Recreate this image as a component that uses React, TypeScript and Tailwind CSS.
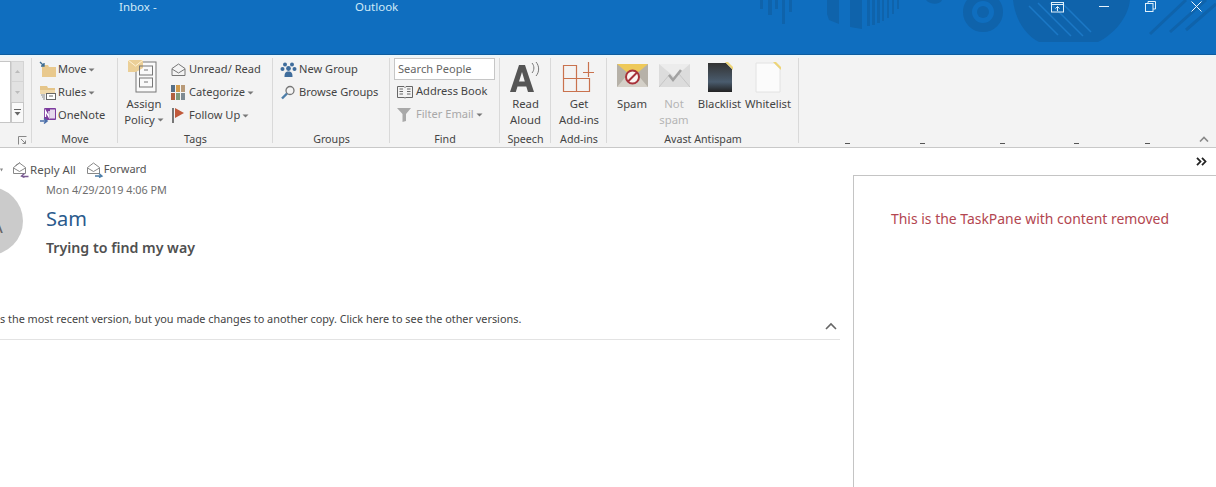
import React from "react";

const font = { fontFamily: '"Noto Sans", "Open Sans", sans-serif' };

function Caret({ className = "" }: { className?: string }) {
  return (
    <svg width="7" height="4" viewBox="0 0 7 4" className={`shrink-0 ${className}`}>
      <path d="M0.5 0.5H6.5L3.5 3.5Z" fill="#777" />
    </svg>
  );
}

function TitleArt() {
  return (
    <svg className="absolute left-[740px] top-0" width="476" height="55" viewBox="0 0 476 55">
      <g fill="#0f63ab">
        <rect x="20" y="0" width="3" height="9" />
        <rect x="28" y="0" width="4" height="15" />
        <rect x="35" y="0" width="3" height="9" />
        <rect x="42" y="0" width="3" height="24" />
        <rect x="49" y="0" width="3" height="12" />
        <path d="M87 0H99V24L89 20L87 14Z" />
        <path d="M110 0H122V29L110 27Z" />
        <rect x="127" y="0" width="3" height="26" />
        <rect x="132" y="0" width="3" height="25" />
        <rect x="137" y="0" width="3" height="23" />
        <rect x="142" y="0" width="2" height="21" />
        <rect x="147" y="0" width="2" height="18" />
        <rect x="152" y="0" width="2" height="14" />
        <rect x="157" y="0" width="2" height="9" />
        <path d="M186 0H202C200 5 190 5 186 0Z" />
        <path d="M273 0H390C388 18 374 34 358 42H299C284 34 275 18 273 0Z" />
      </g>
      <circle cx="243" cy="12" r="15.5" fill="none" stroke="#0f63ab" strokeWidth="9" />
      <circle cx="243" cy="12" r="6" fill="#0f63ab" />
      <g stroke="#1b78c6" strokeWidth="1.5">
        <path d="M289 6L318 35M298 3L331 36M310 3L343 36M322 3L351 32" />
      </g>
      <g stroke="#0f63ab" strokeWidth="3">
        <path d="M410 34L446 0M430 32L466 0M446 30L476 4" />
      </g>
    </svg>
  );
}

function WindowButtons() {
  return (
    <div className="absolute top-0 left-[1034px] flex text-white">
      <div className="w-[46px] flex justify-center pt-[1px]">
        <svg width="14" height="12" viewBox="0 0 14 12" fill="none" stroke="#dff0fb">
          <rect x="1.5" y="1.5" width="12" height="9.5" />
          <path d="M1.5 3.5H13.5M7.5 10V5.5M5.5 7.5L7.5 5.5L9.5 7.5" />
        </svg>
      </div>
      <div className="w-[47px] flex justify-center pt-[6px]">
        <div className="w-[10px] h-[1px] bg-[#e6f3fc]" />
      </div>
      <div className="w-[46px] flex justify-center pt-[1px]">
        <svg width="11" height="11" viewBox="0 0 11 11" fill="none" stroke="#dff0fb">
          <rect x="0.5" y="2.5" width="7.5" height="8" />
          <path d="M3 2.5V0.5H10.5V8H8" />
        </svg>
      </div>
      <div className="w-[47px] flex justify-center pt-[1px]">
        <svg width="11" height="11" viewBox="0 0 11 11" fill="none" stroke="#eef7fd">
          <path d="M0.5 0.5L10.5 10.5M10.5 0.5L0.5 10.5" />
        </svg>
      </div>
    </div>
  );
}

function Row({ icon, label, caret, left, gray }: { icon: React.ReactNode; label: string; caret?: boolean; left: string; gray?: boolean }) {
  return (
    <div className={`h-[23px] flex items-center ${left}`}>
      {icon}
      <span className={`text-[11.1px] whitespace-nowrap ${gray ? "text-[#a8a8a8]" : "text-[#444]"}`}>{label}</span>
      {caret && <Caret className="ml-[2px]" />}
    </div>
  );
}

function Group({ width, label, children }: { width: string; label: string; children: React.ReactNode }) {
  return (
    <div className={`${width} h-[85px] shrink-0 mr-[1px] border-r border-[#d9d9d9] flex flex-col`}>
      <div className="h-[73px] shrink-0">{children}</div>
      <div className="h-[16px] shrink-0 text-[10.7px] leading-[16px] text-center text-[#444] whitespace-nowrap">{label}</div>
    </div>
  );
}

const MoveIcon = (
  <svg width="19" height="18" viewBox="0 0 19 18" className="shrink-0">
    <path d="M3 4H9L10 6H17V16H3Z" fill="#e9c98d" />
    <path d="M1 1L5 5M5 2V5H2" stroke="#3f6d93" strokeWidth="1.4" fill="none" />
  </svg>
);
const RulesIcon = (
  <svg width="19" height="18" viewBox="0 0 19 18" className="shrink-0">
    <path d="M1 2H8L9 4H16V9H1Z" fill="#e5c589" />
    <rect x="1" y="6" width="15" height="4" fill="#f0d9ac" />
    <rect x="7.5" y="9.5" width="9" height="6" fill="#fff" stroke="#666" />
    <path d="M10 12H14" stroke="#666" />
    <path d="M2 11H6M3 13H6M4 15H6" stroke="#888" />
  </svg>
);
const OneNoteIcon = (
  <svg width="19" height="18" viewBox="0 0 19 18" className="shrink-0">
    <rect x="5" y="1" width="12" height="12" rx="1" fill="#7c3a9e" />
    <rect x="11" y="2.5" width="5" height="9" fill="#e6d8ee" />
    <path d="M6.5 10V4L10 10V4" stroke="#fff" strokeWidth="1.3" fill="none" />
    <path d="M1 14H7M5 11.5L8 14L5 16.5" stroke="#4a6ea9" strokeWidth="1.6" fill="none" />
  </svg>
);
const UnreadIcon = (
  <svg width="18" height="14" viewBox="0 0 18 14" fill="none" stroke="#777" className="shrink-0">
    <path d="M1 5.5L7.5 1L14 5.5V12.5H1Z" />
    <path d="M1 6L7.5 10L14 6" />
  </svg>
);
const CategorizeIcon = (
  <svg width="18" height="16" viewBox="0 0 18 16" className="shrink-0">
    <rect x="0" y="0" width="4" height="7" fill="#566f86" />
    <rect x="5" y="0" width="4" height="7" fill="#d19a4b" />
    <rect x="10" y="0" width="4" height="7" fill="#b89a78" />
    <rect x="0" y="8" width="4" height="7" fill="#b0603f" />
    <rect x="5" y="8" width="4" height="7" fill="#7f9a7a" />
    <rect x="10" y="8" width="4" height="7" fill="#7d8a92" />
  </svg>
);
const FlagIcon = (
  <svg width="18" height="16" viewBox="0 0 18 16" className="shrink-0">
    <rect x="1" y="0" width="2" height="15" fill="#777" />
    <path d="M4 0L13 5L4 10Z" fill="#c0593b" />
  </svg>
);
const NewGroupIcon = (
  <svg width="19" height="16" viewBox="0 0 19 16" className="shrink-0" fill="#3f6d9c">
    <circle cx="5" cy="2.5" r="2" />
    <circle cx="12" cy="2.5" r="2" />
    <circle cx="2.5" cy="7" r="2" />
    <circle cx="14.5" cy="7" r="2" />
    <circle cx="8.5" cy="6.5" r="2.4" />
    <path d="M4.5 15C4.5 11 5.5 9.5 8.5 9.5C11.5 9.5 12.5 11 12.5 15Z" />
  </svg>
);
const BrowseIcon = (
  <svg width="19" height="16" viewBox="0 0 19 16" fill="none" className="shrink-0">
    <circle cx="10" cy="5.5" r="4" stroke="#777" strokeWidth="1.3" />
    <path d="M7 8.5L2 13.5" stroke="#4d7ea8" strokeWidth="2.4" />
  </svg>
);
const BookIcon = (
  <svg width="19" height="14" viewBox="0 0 19 14" fill="none" stroke="#666" className="shrink-0">
    <path d="M0.5 1.5H7L8 2.5L9 1.5H15.5V12.5H9L8 13L7 12.5H0.5Z" />
    <path d="M2.5 4H6M2.5 6.5H6M2.5 9H6M10 4H13.5M10 6.5H13.5M10 9H13.5" />
  </svg>
);
const FilterIcon = (
  <svg width="19" height="14" viewBox="0 0 19 14" className="shrink-0">
    <path d="M0 0H14L9 6V13L5.5 14V6Z" fill="#a9a9a9" />
  </svg>
);

function PolicyIcon() {
  return (
    <svg width="32" height="33" viewBox="0 0 32 33" className="mx-auto">
      <rect x="8" y="2" width="20" height="30" fill="#fafafa" stroke="#777" />
      <path d="M0 0H15V8L8 12H0Z" fill="#ebcf97" />
      <path d="M0 0L7.5 6L15 0" fill="none" stroke="#fff3d8" />
      <rect x="11.5" y="6" width="13" height="9" fill="none" stroke="#777" />
      <rect x="11.5" y="18" width="13" height="9" fill="none" stroke="#777" />
      <path d="M16 10H20M16 22H20" stroke="#777" />
    </svg>
  );
}

function BigColumn({ icon, top, gap, lines, caret }: { icon: React.ReactNode; top: string; gap: string; lines: string[]; caret?: boolean }) {
  return (
    <div className={`flex flex-col items-center ${top}`}>
      <div className={gap}>{icon}</div>
      <div className="text-[11.3px] leading-[16px] text-[#444] text-center whitespace-nowrap">{lines[0]}</div>
      <div className="text-[11.3px] leading-[16px] text-[#444] text-center whitespace-nowrap flex items-center gap-[2px]">
        {lines[1]}
        {caret && <Caret />}
      </div>
    </div>
  );
}

const ReadAloudIcon = (
  <svg width="32" height="32" viewBox="0 0 32 32">
    <path d="M9 3H15L24 30H18L16.3 24.5H7.5L5.8 30H0ZM9 19.5H14.8L12 10Z" fill="#555" />
    <path d="M22 1C24.5 4 24.5 8 22 11M26 0C29.5 4 29.5 10 26 14" fill="none" stroke="#777" />
  </svg>
);
const AddinsIcon = (
  <svg width="34" height="33" viewBox="0 0 34 33" fill="none">
    <path d="M1.5 4.5H14.5V30.5H1.5ZM1.5 17.5H27.5V30.5H14.5" stroke="#c9724e" strokeWidth="1.2" />
    <path d="M21 11.5H32M26.5 1V16" stroke="#c9724e" strokeWidth="1.2" />
  </svg>
);

function Envelope({ disabled }: { disabled?: boolean }) {
  if (disabled) {
    return (
      <svg width="31" height="26" viewBox="0 0 31 26">
        <rect x="0" y="2" width="31" height="23" fill="#dcdcdc" />
        <path d="M0 2L15.5 15L31 2" fill="#ececec" />
        <path d="M0 25L11 12M31 25L20 12" stroke="#c6c6c6" />
        <path d="M10 13L14 18L22 8" fill="none" stroke="#a2a2a2" strokeWidth="2.6" />
      </svg>
    );
  }
  return (
    <svg width="31" height="26" viewBox="0 0 31 26">
      <rect x="0" y="2" width="31" height="23" fill="#b6b1a8" />
      <path d="M0 2H31L15.5 15Z" fill="#eec95a" />
      <path d="M0 25L11 12L15.5 15L20 12L31 25Z" fill="#d4d0c8" />
      <circle cx="15.5" cy="15" r="6.5" fill="#fbf4f2" stroke="#a8313a" strokeWidth="2" />
      <path d="M11 19.5L20 10.5" stroke="#a8313a" strokeWidth="2" />
    </svg>
  );
}

function Note({ dark }: { dark?: boolean }) {
  return (
    <svg width="28" height="32" viewBox="0 0 28 32">
      <defs>
        <linearGradient id="darkNote" x1="0" y1="0" x2="0" y2="1">
          <stop offset="0" stopColor="#333" />
          <stop offset="0.65" stopColor="#4a5c6e" />
          <stop offset="1" stopColor="#222" />
        </linearGradient>
      </defs>
      <path d="M2 1H20L26 7V30H2Z" fill={dark ? "url(#darkNote)" : "#fbfbfb"} stroke={dark ? "none" : "#e2e2e2"} />
      <path d="M19 0H22L27 5V8Z" fill="#eed577" />
    </svg>
  );
}

function AvastColumn({ icon, lines, width, gray }: { icon: React.ReactNode; lines: string[]; width: string; gray?: boolean }) {
  return (
    <div className={`${width} flex flex-col items-center`}>
      <div className="h-[38px] pt-[4px]">{icon}</div>
      {lines.map((l) => (
        <div key={l} className={`text-[11.3px] leading-[16px] whitespace-nowrap ${gray ? "text-[#b5b5b5]" : "text-[#444]"}`}>
          {l}
        </div>
      ))}
    </div>
  );
}

function Ribbon() {
  return (
    <div className="h-[93px] pt-[1px] flex bg-[#f3f3f3] border-b border-[#c8c8c8] border-t-2 border-t-[#eaf6fb]">
      <Group width="w-[32px]" label="">
        <div className="flex pt-[3px]">
          <div className="w-[11px] h-[62px] bg-white border-y border-r border-[#c6c6c6]" />
          <div className="w-[13px] flex flex-col">
            <div className="h-[21px] bg-[#e2e2e2] border border-[#d4d4d4] flex items-center justify-center">
              <svg width="5" height="3" viewBox="0 0 5 3"><path d="M0 3H5L2.5 0Z" fill="#bbb" /></svg>
            </div>
            <div className="h-[20px] bg-[#e2e2e2] border-x border-[#d4d4d4] flex items-center justify-center">
              <svg width="5" height="3" viewBox="0 0 5 3"><path d="M0 0H5L2.5 3Z" fill="#bbb" /></svg>
            </div>
            <div className="h-[21px] bg-[#f9f9f9] border border-[#c6c6c6] flex items-center justify-center">
              <svg width="7" height="7" viewBox="0 0 7 7"><path d="M0 0.5H7" stroke="#666" /><path d="M0.5 3H6.5L3.5 6.5Z" fill="#666" /></svg>
            </div>
          </div>
        </div>
        <div className="flex justify-end pr-[4px] pt-[13px]">
          <svg width="9" height="9" viewBox="0 0 9 9" fill="none" stroke="#888">
            <path d="M0.5 8.5V0.5H8.5" />
            <path d="M3 3L7.5 7.5M7.5 4.5V7.5H4.5" />
          </svg>
        </div>
      </Group>

      <Group width="w-[85px]" label="Move">
        <Row left="pl-[6px]" icon={MoveIcon} label="Move" caret />
        <Row left="pl-[6px]" icon={RulesIcon} label="Rules" caret />
        <Row left="pl-[6px]" icon={OneNoteIcon} label="OneNote" />
      </Group>

      <Group width="w-[154px]" label="Tags">
        <div className="flex">
          <div className="w-[52px] pr-[2px] shrink-0">
            <BigColumn top="pt-[2px]" gap="mb-[3px]" icon={<PolicyIcon />} lines={["Assign", "Policy"]} caret />
          </div>
          <div>
            <Row left="" icon={UnreadIcon} label="Unread/ Read" />
            <Row left="" icon={CategorizeIcon} label="Categorize" caret />
            <Row left="" icon={FlagIcon} label="Follow Up" caret />
          </div>
        </div>
      </Group>

      <Group width="w-[116px]" label="Groups">
        <Row left="pl-[6px]" icon={NewGroupIcon} label="New Group" />
        <Row left="pl-[6px]" icon={BrowseIcon} label="Browse Groups" />
      </Group>

      <Group width="w-[109px]" label="Find">
        <div className="pl-[3px]">
          <div className="w-[101px] h-[22px] bg-white border border-[#c6c6c6] px-[3px] text-[11.1px] leading-[19px] text-[#666]">Search People</div>
        </div>
        <Row left="pl-[6px]" icon={BookIcon} label="Address Book" />
        <Row left="pl-[6px]" icon={FilterIcon} label="Filter Email" caret gray />
      </Group>

      <Group width="w-[50px]" label="Speech">
        <BigColumn top="pt-[4px]" gap="mb-[2px]" icon={ReadAloudIcon} lines={["Read", "Aloud"]} />
      </Group>

      <Group width="w-[55px]" label="Add-ins">
        <BigColumn top="pt-[3px]" gap="mb-[2px]" icon={AddinsIcon} lines={["Get", "Add-ins"]} />
      </Group>

      <Group width="w-[191px]" label="Avast Antispam">
        <div className="flex pl-[2px]">
          <AvastColumn width="w-[44px]" icon={<Envelope />} lines={["Spam"]} />
          <AvastColumn width="w-[40px]" icon={<Envelope disabled />} lines={["Not", "spam"]} gray />
          <AvastColumn width="w-[51px]" icon={<Note dark />} lines={["Blacklist"]} />
          <AvastColumn width="w-[46px]" icon={<Note />} lines={["Whitelist"]} />
        </div>
      </Group>

      <div className="flex-1 h-[87px] flex flex-col justify-end">
        <div className="flex items-end justify-between">
          <div className="flex pb-[1px]">
            <div className="ml-[45px] w-[5px] h-[1px] bg-[#555]" />
            <div className="ml-[70px] w-[5px] h-[1px] bg-[#555]" />
            <div className="ml-[75px] w-[5px] h-[1px] bg-[#555]" />
            <div className="ml-[69px] w-[5px] h-[1px] bg-[#555]" />
            <div className="ml-[66px] w-[5px] h-[1px] bg-[#555]" />
          </div>
          <svg width="10" height="6" viewBox="0 0 10 6" fill="none" stroke="#888" strokeWidth="1.6" className="mr-[7px] mb-[3px]">
            <path d="M1 5.5L5 1.5L9 5.5" />
          </svg>
        </div>
      </div>
    </div>
  );
}

function MiniEnvelope({ reply }: { reply?: boolean }) {
  return (
    <svg width="18" height="16" viewBox="0 0 18 16" fill="none" className="shrink-0">
      <path d="M1.5 5.5L7.5 1L13.5 5.5V11.5H1.5Z" stroke="#888" />
      {reply && <path d="M3.5 3.5L8 0.5" stroke="#888" />}
      <path d="M1.5 6L7.5 9.5L13.5 6" stroke="#888" />
      {reply ? (
        <path d="M16.5 14.5H10M12.5 11.5L9.5 14L12.5 15.5" stroke="#7a5a93" strokeWidth="1.4" />
      ) : (
        <path d="M9 14H15.5M13 11.5L16 14L13 15.5" stroke="#4d7ea8" strokeWidth="1.4" />
      )}
    </svg>
  );
}

function MessagePane() {
  return (
    <div className="w-[853px] shrink-0 overflow-hidden">
      <div className="h-[28px] flex items-center pt-[15px] text-[#555]">
        <svg width="4" height="4" viewBox="0 0 4 4" className="mr-[8px]"><path d="M0 0.5H3L1.5 3.5Z" fill="#888" /></svg>
        <MiniEnvelope reply />
        <span className="text-[11.5px]">Reply All</span>
        <span className="w-[10px]" />
        <MiniEnvelope />
        <span className="text-[11px]">Forward</span>
      </div>
      <div className="flex h-[85px] -mt-[3px]">
        <div className="-ml-[45px] mt-[14px] w-[68px] h-[68px] rounded-full bg-[#cbcbcb] shrink-0 flex items-center justify-center text-[18px] text-[#666]">
          <span className="ml-[16px] mt-[10px]">A</span>
        </div>
        <div className="ml-[23px]">
          <div className="text-[10.85px] leading-[15px] text-[#6e6e6e] pt-[9px]">Mon 4/29/2019 4:06 PM</div>
          <div className="text-[20px] leading-[27px] text-[#2a5a8c] pt-[8px]">Sam</div>
          <div className="text-[14.2px] leading-[20px] font-semibold text-[#505050] pt-[6px]">Trying to find my way</div>
        </div>
      </div>
      <div className="w-[840px] h-[65px] border-b border-[#e3e3e3] mt-[17px] flex items-end justify-between pb-[5px]">
        <div className="text-[10.87px] leading-[15px] text-[#444] whitespace-nowrap pb-[8px]">
          s the most recent version, but you made changes to another copy. Click here to see the other versions.
        </div>
        <svg width="12" height="8" viewBox="0 0 12 8" fill="none" stroke="#666" strokeWidth="1.6" className="mr-[3px] mb-[4px]">
          <path d="M1 7L6 2L11 7" />
        </svg>
      </div>
    </div>
  );
}

function TaskPane() {
  return (
    <div className="flex-1 flex flex-col">
      <div className="h-[27px] flex items-center justify-end pr-[9px]">
        <svg width="11" height="9" viewBox="0 0 11 9" fill="none" stroke="#222" strokeWidth="1.8">
          <path d="M1 0.8L4.5 4.5L1 8.2M6 0.8L9.5 4.5L6 8.2" />
        </svg>
      </div>
      <div className="flex-1 border-l border-t border-[#c4c4c4] pl-[37px] pt-[34px]">
        <div className="text-[13.95px] leading-[18px] text-[#b34650] whitespace-nowrap">This is the TaskPane with content removed</div>
      </div>
    </div>
  );
}

export default function App() {
  return (
    <div className="w-[1216px] h-[487px] overflow-hidden bg-white flex flex-col" style={font}>
      <div className="relative h-[54px] bg-[#0f6ebf] shrink-0 border-b border-[#0d5c9f] box-content">
        <TitleArt />
        <div className="relative flex text-[11.5px] leading-[14px] text-[#cfeaf8] pl-[119px]">
          <span className="w-[236px]">Inbox -</span>
          <span>Outlook</span>
        </div>
        <WindowButtons />
      </div>
      <Ribbon />
      <div className="flex flex-1 min-h-0">
        <MessagePane />
        <TaskPane />
      </div>
    </div>
  );
}
